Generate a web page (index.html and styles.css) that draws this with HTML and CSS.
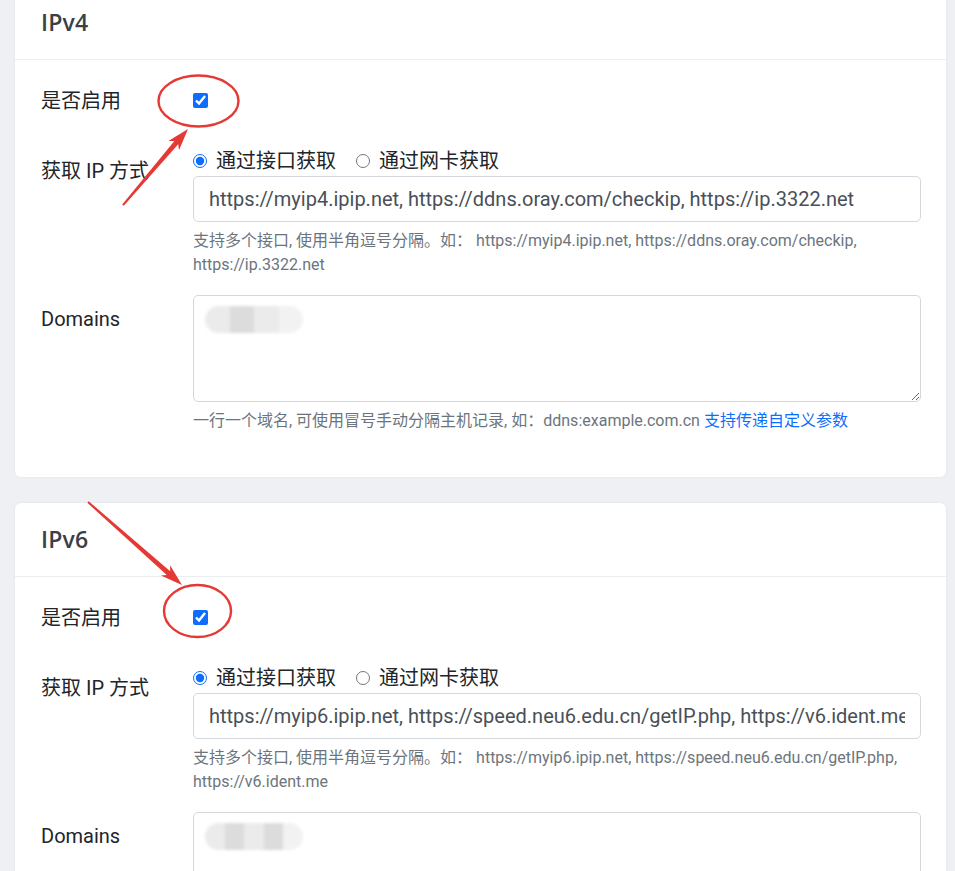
FILE: index.html
```html
<!DOCTYPE html>
<html lang="zh-CN">
<head>
<meta charset="utf-8">
<title>DDNS 设置</title>
<link rel="stylesheet" href="styles.css">
</head>
<body>
<main class="page">
  <section class="card card-first">
    <header class="card-header"><h5 class="card-title">IPv4</h5></header>
    <div class="card-body">
      <div class="form-row row-check">
        <label class="form-label" for="ipv4-enable">是否启用</label>
        <div class="form-control-col"><input class="check" type="checkbox" id="ipv4-enable" checked></div>
      </div>
      <div class="form-row">
        <label class="form-label">获取 IP 方式</label>
        <div class="form-control-col">
          <div class="radio-line">
            <label class="radio"><input type="radio" name="ipv4-type" checked> 通过接口获取</label>
            <label class="radio"><input type="radio" name="ipv4-type"> 通过网卡获取</label>
          </div>
          <input class="text-input" type="text" value="https://myip4.ipip.net, https://ddns.oray.com/checkip, https://ip.3322.net">
          <div class="form-text">支持多个接口, 使用半角逗号分隔。如： https://myip4.ipip.net, https://ddns.oray.com/checkip, https://ip.3322.net</div>
        </div>
      </div>
      <div class="form-row">
        <label class="form-label label-area">Domains</label>
        <div class="form-control-col">
          <div class="area-wrap">
            <textarea class="text-area"></textarea>
            <span class="redacted"><i></i><i class="dk"></i><i></i><i class="lt"></i></span>
          </div>
          <div class="form-text">一行一个域名, 可使用冒号手动分隔主机记录, 如：ddns:example.com.cn <a href="#" class="link">支持传递自定义参数</a></div>
        </div>
      </div>
    </div>
  </section>

  <section class="card">
    <header class="card-header"><h5 class="card-title">IPv6</h5></header>
    <div class="card-body">
      <div class="form-row row-check">
        <label class="form-label" for="ipv6-enable">是否启用</label>
        <div class="form-control-col"><input class="check" type="checkbox" id="ipv6-enable" checked></div>
      </div>
      <div class="form-row">
        <label class="form-label">获取 IP 方式</label>
        <div class="form-control-col">
          <div class="radio-line">
            <label class="radio"><input type="radio" name="ipv6-type" checked> 通过接口获取</label>
            <label class="radio"><input type="radio" name="ipv6-type"> 通过网卡获取</label>
          </div>
          <input class="text-input" type="text" value="https://myip6.ipip.net, https://speed.neu6.edu.cn/getIP.php, https://v6.ident.me">
          <div class="form-text">支持多个接口, 使用半角逗号分隔。如： https://myip6.ipip.net, https://speed.neu6.edu.cn/getIP.php, https://v6.ident.me</div>
        </div>
      </div>
      <div class="form-row">
        <label class="form-label label-area">Domains</label>
        <div class="form-control-col">
          <div class="area-wrap">
            <textarea class="text-area"></textarea>
            <span class="redacted"><i></i><i class="dk"></i><i></i><i class="dk"></i><i class="lt"></i></span>
          </div>
        </div>
      </div>
    </div>
  </section>
</main>

<!-- hand-drawn markers pointing at the enable switches -->
<svg class="marks" width="955" height="871" viewBox="0 0 955 871" aria-hidden="true">
  <g fill="none" stroke="#e53935" stroke-width="2.4">
    <ellipse cx="198.5" cy="101" rx="40" ry="25.5"/>
    <ellipse cx="197.5" cy="611" rx="33.5" ry="26"/>
  </g>
  <g fill="#e53935">
    <polygon points="122.2,204.4 174.4,141.1 168.4,141.1 188,129 179,150.3 178.2,144.3 123.8,205.7"/>
    <polygon points="87.3,502.8 166.8,575 160.9,575.6 182,585 170.1,565.2 170.2,571.2 88.7,501.3"/>
  </g>
</svg>
</body>
</html>
```

FILE: styles.css
```css
* { box-sizing: border-box; }

html, body {
  margin: 0;
  height: 100%;
  overflow: hidden;
}

body {
  position: relative;
  background: #eef0f4;
  color: #212529;
  font-family: Roboto, "Noto Sans CJK SC", sans-serif;
  font-size: 20px;
  line-height: 1.5;
}

.page {
  padding: 0 9px 0 15px;
}

.card {
  background: #fff;
  border-radius: 6px;
  box-shadow: 0 0 3px rgba(30, 40, 70, 0.06);
  margin-bottom: 26px;
}

.card-first {
  margin-top: -14px;
}

.card-header {
  height: 74px;
  padding: 0 26px;
  border-bottom: 1px solid #ebedf0;
  display: flex;
  align-items: center;
}

.card-title {
  margin: 0;
  font-family: "Open Sans", sans-serif;
  font-size: 23px;
  font-weight: 600;
  color: #3b3f48;
  letter-spacing: 0.2px;
}

.card-body {
  padding: 18px 25px 26px 26px;
}

.form-row {
  display: grid;
  grid-template-columns: 152px 1fr;
  margin-bottom: 18px;
}

.row-check {
  margin-bottom: 24px;
}

.form-label {
  padding-top: 10px;
  line-height: 30px;
  white-space: nowrap;
}

.row-check .form-label {
  padding-top: 8px;
}

.label-area {
  padding-top: 9px;
}

.row-check .form-control-col {
  display: flex;
  align-items: center;
  height: 44px;
}

.check {
  width: 15px;
  height: 15px;
  margin: 0;
  accent-color: #0d6efd;
}

.radio-line {
  display: flex;
  gap: 20px;
  height: 30px;
  align-items: center;
}

.radio {
  display: inline-flex;
  align-items: center;
  gap: 9px;
  white-space: nowrap;
}

.radio input {
  width: 14px;
  height: 14px;
  margin: 0;
  accent-color: #0d6efd;
}

.text-input {
  display: block;
  width: 100%;
  height: 46px;
  margin: 0;
  padding: 0 15px;
  border: 1px solid #d4d8dd;
  border-radius: 5px;
  font: inherit;
  color: #495057;
  background: #fff;
  outline: none;
}

.form-text {
  margin-top: 7px;
  font-size: 16px;
  line-height: 24px;
  color: #6c757d;
}

.area-wrap {
  position: relative;
}

.text-area {
  display: block;
  width: 100%;
  height: 107px;
  margin: 0;
  padding: 8px 15px;
  border: 1px solid #d4d8dd;
  border-radius: 5px;
  font: inherit;
  color: #495057;
  resize: vertical;
}

/* masked domain list */
.redacted {
  position: absolute;
  left: 12px;
  top: 11px;
  display: flex;
  height: 27px;
  width: 98px;
  border-radius: 14px;
  overflow: hidden;
  filter: blur(1.5px);
}

.redacted i {
  flex: 1;
  background: #ebebeb;
}

.redacted i.dk { background: #dcdcdc; }
.redacted i.lt { background: #f2f2f2; }

.link {
  color: #0d6efd;
  text-decoration: none;
}

.marks {
  position: absolute;
  left: 0;
  top: 0;
  pointer-events: none;
}
```
